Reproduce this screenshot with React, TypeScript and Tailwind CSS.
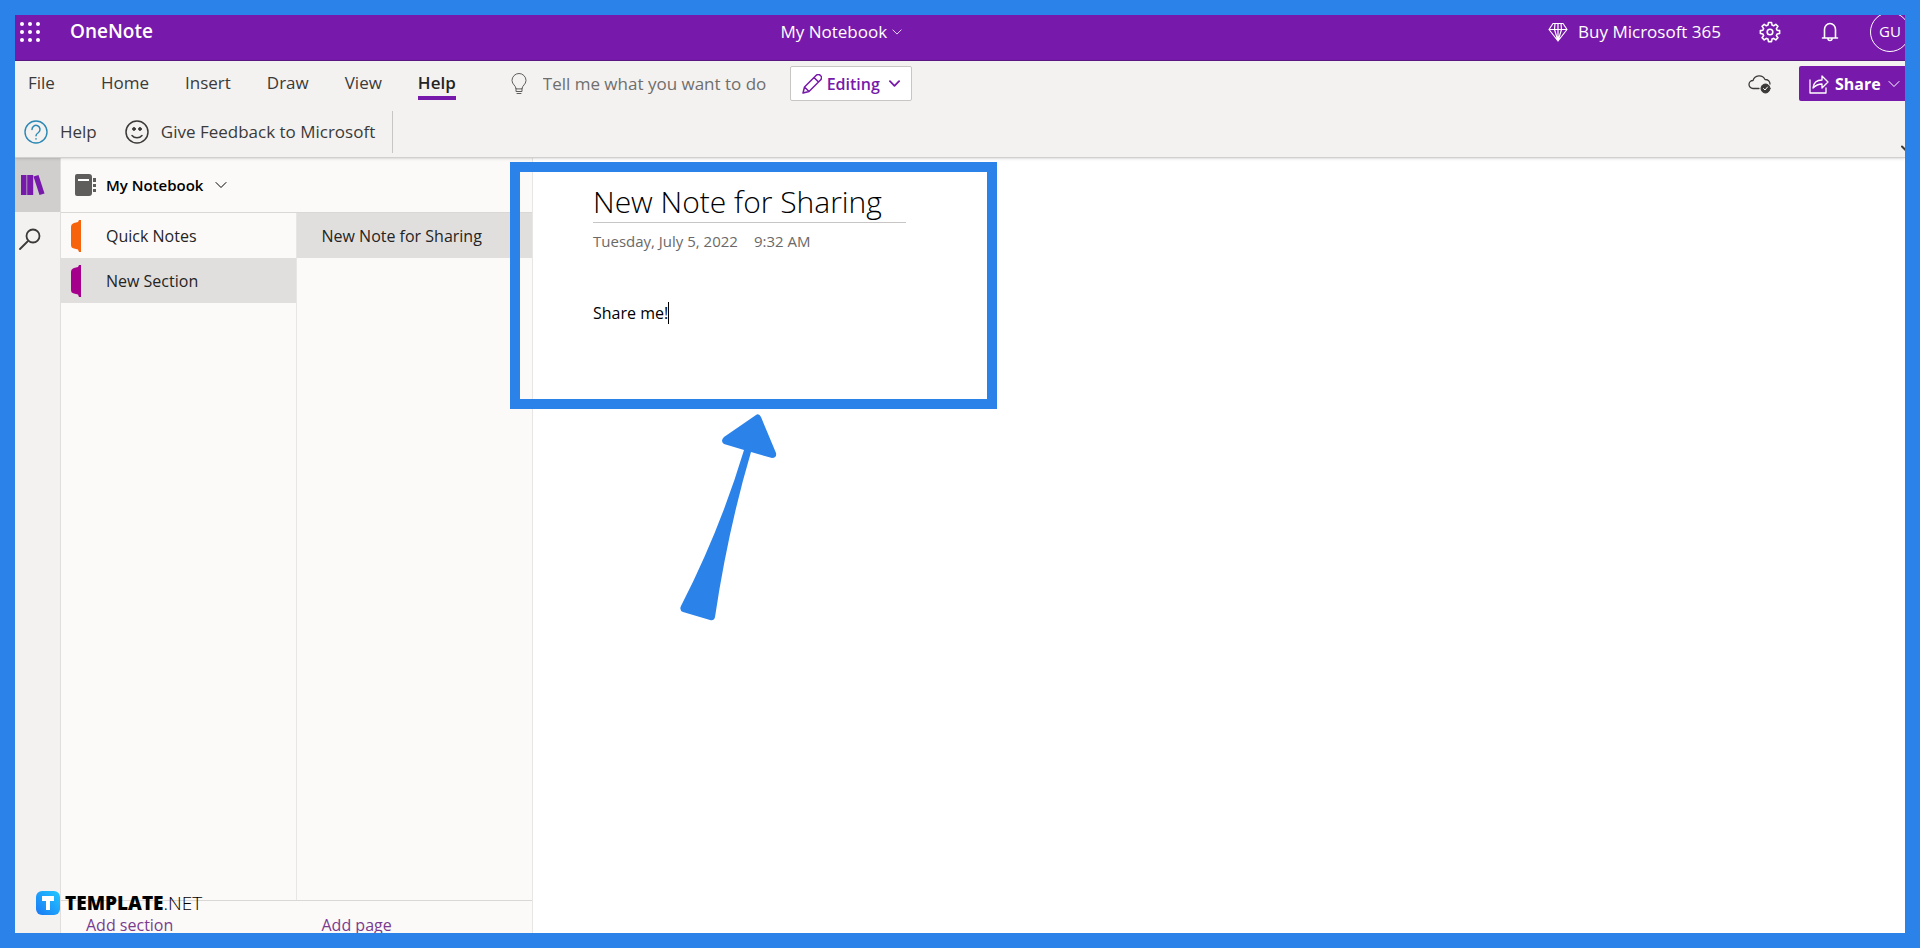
import type { ReactNode } from "react";

const tabs = ["Home", "Insert", "Draw", "View"];

const sections = [
  { name: "Quick Notes", color: "#f7630c", active: false },
  { name: "New Section", color: "#a4008c", active: true },
];

function Icon({
  className,
  box,
  children,
}: {
  className: string;
  box: string;
  children: ReactNode;
}) {
  return (
    <svg
      viewBox={box}
      className={className}
      fill="none"
      stroke="currentColor"
      strokeLinecap="round"
      strokeLinejoin="round"
      aria-hidden="true"
    >
      {children}
    </svg>
  );
}

function Chevron({ className }: { className: string }) {
  return (
    <Icon box="0 0 12 12" className={className}>
      <path d="M1 3.5l5 5 5-5" />
    </Icon>
  );
}

/* ================= TITLE BAR ================= */

function TitleBar() {
  return (
    <header className="flex h-[46px] items-center overflow-hidden border-b border-[#5c1a85] bg-[#7719aa] pb-3 text-white">
      <div className="flex w-[40.5%] items-center pl-[5px]">
        <button aria-label="App launcher">
          <svg viewBox="0 0 20 20" className="size-5" fill="currentColor">
            {[2, 10, 18].map((y) =>
              [2, 10, 18].map((x) => (
                <circle key={`${x}-${y}`} cx={x} cy={y} r="2" />
              )),
            )}
          </svg>
        </button>
        <span className="ml-[30px] text-[19px] font-semibold">OneNote</span>
      </div>

      <button className="flex items-center gap-[5px] text-[17px]">
        My Notebook
        <Chevron className="size-[10px]" />
      </button>

      <div className="-mr-[5px] ml-auto flex shrink-0 items-center">
        <button className="flex items-center gap-[10px] text-[17px]">
          <Icon box="0 0 20 20" className="size-5">
            <path
              strokeWidth="1.2"
              d="M5 1.5h10l4 6L10 19 1 7.5zM1 7.5h18M7 1.5L6.5 7.5 10 19l3.5-11.5L13 1.5M10 1.5v17"
            />
          </Icon>
          Buy Microsoft 365
        </button>
        <button aria-label="Settings" className="ml-[38px]">
          <Icon box="0 0 22 22" className="size-[22px]">
            <circle cx="11" cy="11" r="2.8" strokeWidth="1.6" />
            <path
              strokeWidth="1.6"
              d="M9.5 1.5h3l.5 2.6 1.6.7 2.2-1.500 2.100 2.100-1.500 2.200.7 1.600 2.500.4v2.900l-2.500.5-.7 1.600 1.500 2.200-2.100 2.100-2.200-1.500-1.600.7-.5 2.500h-3l-.5-2.500-1.600-.7-2.200 1.500-2.100-2.100 1.500-2.200-.7-1.600-2.500-.5V9.600l2.500-.4.7-1.600-1.500-2.200 2.100-2.100 2.200 1.500 1.600-.7z"
            />
          </Icon>
        </button>
        <button aria-label="Notifications" className="ml-[40px]">
          <Icon box="0 0 18 20" className="h-5 w-[18px]">
            <path
              strokeWidth="1.6"
              d="M1.5 16h15M3.500 16V7.500a5.500 6 0 0 1 11 0V16M7 16.500a2 2 0 0 0 4 0"
            />
          </Icon>
        </button>
        <button className="ml-[31px] size-10 rounded-full border border-white text-[15px]">
          GU
        </button>
      </div>
    </header>
  );
}

/* ================= RIBBON ================= */

function Ribbon() {
  return (
    <div className="relative z-10 border-b border-[#d2d0ce] bg-[#f3f2f1] text-[17px] text-[#3b3a39] shadow-sm">
      <div className="flex h-[45px] items-center">
        <nav className="flex h-full items-start gap-9 pt-1 pl-[13px]">
          <button className="mr-[10px] h-[35px]">File</button>
          {tabs.map((tab) => (
            <button key={tab} className="h-[35px]">
              {tab}
            </button>
          ))}
          <button className="h-[35px] border-b-4 border-[#7719aa] pt-1 font-semibold text-[#252423]">
            Help
          </button>
        </nav>

        <label className="ml-[55px] flex items-center gap-4">
          <Icon box="0 0 16 21" className="h-[21px] w-4 text-[#605e5c]">
            <path d="M5 15.500c0-3-4-4-4-8a7 7 0 0 1 14 0c0 4-4 5-4 8zM5 15.500v3h6v-3M6 20.500h4" />
          </Icon>
          <input
            aria-label="Tell me what you want to do"
            placeholder="Tell me what you want to do"
            className="w-[230px] bg-transparent outline-none placeholder:text-[#706e6c]"
          />
        </label>

        <button className="ml-[17px] flex h-[35px] w-[122px] items-center justify-center gap-[5px] rounded-xs border border-[#c8c6c4] bg-white text-[16px] font-semibold text-[#7719aa]">
          <Icon box="0 0 20 20" className="size-5">
            <path
              strokeWidth="1.5"
              d="M1 19l1.500-6L14 1.500a2.500 2.500 0 0 1 4.500 4.500L7 17.500zM12 3.500L16.500 8M2.500 13L7 17.500"
            />
          </Icon>
          Editing
          <Chevron className="ml-1 size-[11px] stroke-2" />
        </button>

        <div className="ml-auto flex items-center gap-[28px]">
          <Icon box="0 0 23 20" className="h-5 w-[23px]">
            <path
              strokeWidth="1.3"
              d="M11 14.500H5a4 4 0 0 1 0-8 6.500 6.500 0 0 1 12-1c3 0 5 2 5 4.500"
            />
            <circle cx="17.5" cy="14.5" r="4.5" fill="currentColor" />
            <path d="M15.500 14.500l1.500 1.500 2.500-3" stroke="#fff" />
          </Icon>
          <button className="flex h-[35px] w-[106px] items-center gap-[6px] rounded-l-xs bg-[#7719aa] pl-[10px] text-[16px] font-bold text-white">
            <Icon box="0 0 20 20" className="size-5">
              <path
                strokeWidth="1.3"
                d="M1 6v13h16v-5M4 14c.5-5 3-8 9-8V2l6 6-6 6v-4c-4 0-6 1-9 4z"
              />
            </Icon>
            Share
            <Chevron className="ml-px size-3" />
          </button>
        </div>
      </div>

      <div className="flex h-[51px] items-center overflow-hidden pt-px pl-[9px]">
        <button className="flex items-center gap-3">
          <Icon box="0 0 24 24" className="size-6 text-[#2b88b4]">
            <circle cx="12" cy="12" r="11" strokeWidth="1.4" />
            <path
              strokeWidth="1.5"
              d="M8 9.500a4 4 0 1 1 6.500 3c-1.800 1.200-2.500 1.700-2.500 3.200M12 18.800v.2"
            />
          </Icon>
          Help
        </button>
        <button className="ml-[28px] flex items-center gap-3">
          <Icon box="0 0 24 24" className="size-6">
            <circle cx="12" cy="12" r="11" strokeWidth="1.5" />
            <circle cx="9" cy="9" r="1.4" fill="currentColor" />
            <circle cx="15" cy="9" r="1.4" fill="currentColor" />
            <path strokeWidth="1.5" d="M7 15.500c2.500 3 7.500 3 10 0" />
          </Icon>
          Give Feedback to Microsoft
        </button>
        <div className="ml-[17px] h-[42px] border-l border-[#c8c6c4]" />
        <button aria-label="Collapse ribbon" className="-mr-2 ml-auto self-end pb-[2px]">
          <Chevron className="size-3 stroke-2" />
        </button>
      </div>
    </div>
  );
}

/* ================= NAVIGATION ================= */

function Rail() {
  return (
    <nav className="flex w-[46px] shrink-0 flex-col border-r border-[#e1dfdd] bg-[#f3f2f1]">
      <button
        aria-label="Notebooks"
        className="flex h-[54px] items-center bg-[#d0cfce] pl-[6px]"
      >
        <svg viewBox="0 0 24 22" className="h-[22px] w-6" fill="#7719aa">
          <path d="M0 1h5.500v20H0zM6.200 1h6v20h-6zM12.500 2.500l5-1.500 6 18.500-5 1.500z" />
        </svg>
      </button>
      <button aria-label="Search" className="mt-4 pl-[4px]">
        <Icon box="0 0 22 22" className="size-[22px] text-[#3b3a39]">
          <path
            strokeWidth="1.8"
            d="M8.500 13.500L1 21M20.500 8a6.500 6.500 0 1 1-13 0 6.500 6.500 0 0 1 13 0z"
          />
        </Icon>
      </button>
    </nav>
  );
}

function Sidebar() {
  return (
    <aside className="flex w-[472px] shrink-0 flex-col border-r border-[#e8e6e4] bg-[#fbfaf9] text-[16px] text-[#252423]">
      <button className="flex h-[55px] items-center border-b border-[#dad8d6] pl-[14px] text-[15px] font-semibold text-black">
        <svg viewBox="0 0 21 22" className="h-[22px] w-[21px]" fill="#5f5d5b">
          <path d="M2 0h12a3 3 0 0 1 3 3v16a3 3 0 0 1-3 3H2a2 2 0 0 1-2-2V2a2 2 0 0 1 2-2zM18 4h3v4h-3zM18 10h3v3h-3zM18 15h3v3h-3z" />
          <path d="M3 5h11v2H3z" fill="#fff" />
        </svg>
        <span className="ml-[10px]">My Notebook</span>
        <Chevron className="ml-3 size-3" />
      </button>

      <div className="grid grow grid-cols-2">
        <ul className="border-r border-[#e8e6e4]">
          {sections.map((section) => (
            <li key={section.name}>
              <button
                className={
                  section.active
                    ? "flex h-[45px] w-full items-center gap-[25px] bg-[#e1dfdd] pl-[10px]"
                    : "flex h-[45px] w-full items-center gap-[25px] pl-[10px]"
                }
              >
                <svg
                  viewBox="0 0 10 32"
                  className="h-8 w-[10px]"
                  fill={section.color}
                >
                  <path d="M10 0v32H8l-1-2.500L3 28.500Q0 28 0 25V7q0-3 3-4l4-1 1-2z" />
                </svg>
                {section.name}
              </button>
            </li>
          ))}
        </ul>
        <ul>
          <li>
            <button className="flex h-[45px] w-full items-center bg-[#e1dfdd] pl-[25px]">
              New Note for Sharing
            </button>
          </li>
        </ul>
      </div>

      <div className="grid h-[33px] grid-cols-2 items-end overflow-hidden border-t border-[#dad8d6] leading-4 text-[#7a3b8f]">
        <button className="pl-[25px] text-left">Add section</button>
        <button className="pl-[25px] text-left">Add page</button>
      </div>
    </aside>
  );
}

/* ================= NOTE ================= */

function Note() {
  return (
    <main className="grow bg-white pt-6 pl-[60px] text-black">
      <h1 className="w-[313px] border-b border-[#c8c6c4] text-[30px] leading-10 font-light">
        New Note for Sharing
      </h1>
      <p className="flex gap-4 pt-2 text-[15px] leading-5 text-[#6b6967]">
        <span>Tuesday, July 5, 2022</span>
        <span>9:32 AM</span>
      </p>
      <p className="mt-[50px] flex items-center text-[16px]">
        Share me!
        <span className="h-[22px] w-px bg-black" />
      </p>
    </main>
  );
}

export default function App() {
  return (
    <div className="relative flex min-h-screen flex-col overflow-hidden border-[15px] border-[#2b83ea] font-['Open_Sans','Noto_Sans',sans-serif]">
      <TitleBar />
      <Ribbon />
      <div className="flex grow">
        <Rail />
        <Sidebar />
        <Note />
      </div>

      {/* Callout around the note */}
      <div className="absolute top-[147px] left-[495px] z-20 h-[247px] w-[487px] border-[10px] border-[#2b83ea]" />
      <svg
        viewBox="0 0 140 240"
        className="absolute top-[385px] left-[645px] z-20 h-[240px] w-[140px]"
        fill="#2b83ea"
        aria-hidden="true"
      >
        <path d="M96 15q3-2 5 2l15 36q1 5-4 5l-21-6Q68 130 55 217q-1 4-5 3l-27-8q-4-2-2-6Q60 130 84 50l-20-6q-4-3 0-7z" />
      </svg>

      {/* Watermark */}
      <div className="absolute bottom-[18px] left-[21px] z-20 flex items-center gap-[5px] text-[19px] leading-6 text-black">
        <svg viewBox="0 0 24 24" className="size-6" aria-hidden="true">
          <defs>
            <linearGradient id="mark" x1="1" y1="0" x2="0" y2="1">
              <stop offset="0" stopColor="#22c8ff" />
              <stop offset="1" stopColor="#1a78f5" />
            </linearGradient>
          </defs>
          <rect width="24" height="24" rx="6" fill="url(#mark)" />
          <path d="M6 5h12v5h-4v9h-4v-9H6z" fill="#fff" />
        </svg>
        <span>
          <b className="font-extrabold">TEMPLATE</b>
          <span className="font-light">.NET</span>
        </span>
      </div>
    </div>
  );
}
